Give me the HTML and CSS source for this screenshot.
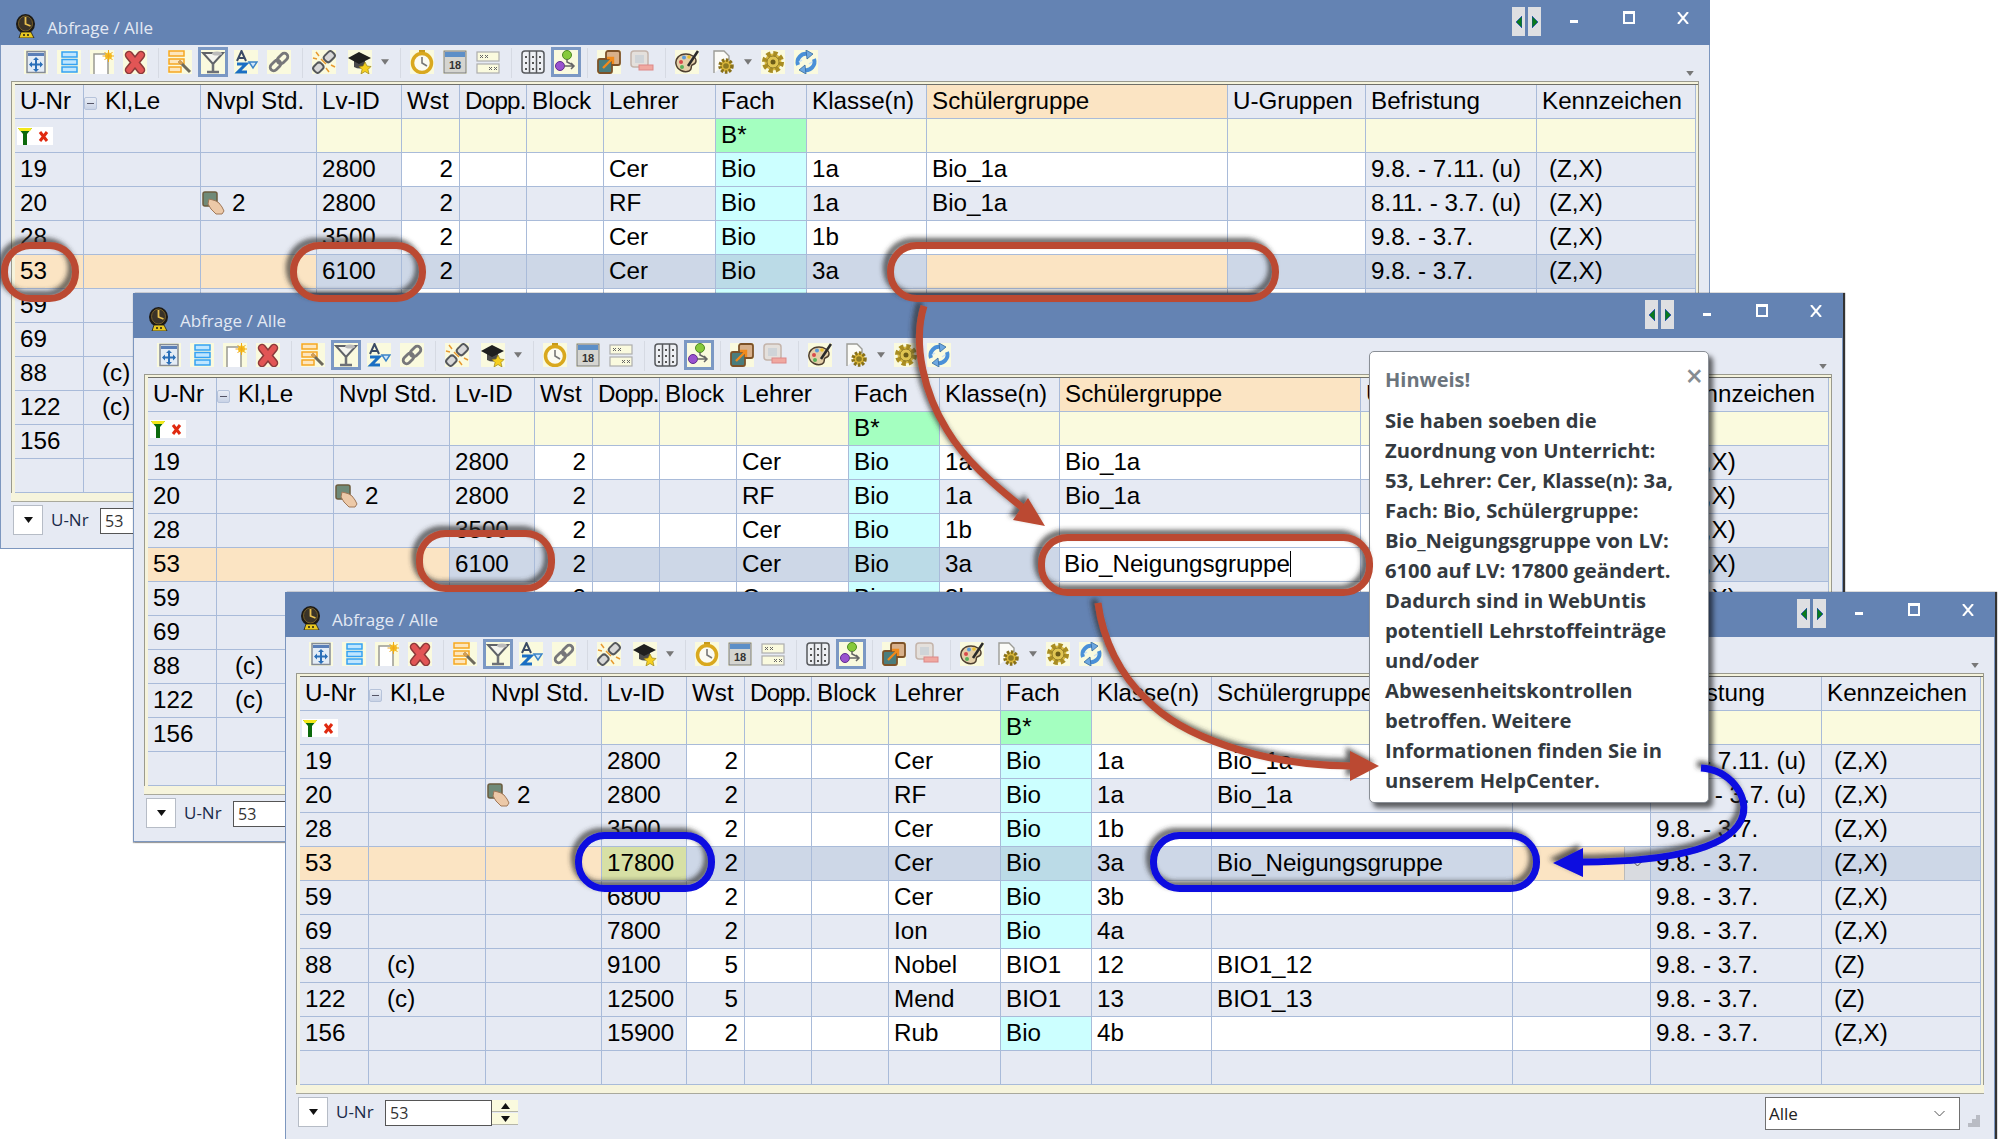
FILE: index.html
```html
<!DOCTYPE html>
<html lang="de">
<head>
<meta charset="utf-8">
<title>Abfrage / Alle</title>
<link rel="stylesheet" href="styles.css">
</head>
<body>
<svg class="defs" xmlns="http://www.w3.org/2000/svg">
  <symbol id="logo" viewBox="0 0 22 24">
    <ellipse cx="10.500" cy="10" rx="9.500" ry="10" fill="#1d1a16"/>
    <ellipse cx="10.500" cy="9.500" rx="7" ry="7.500" fill="#3a3328" stroke="#8a6d2a" stroke-width=".8"/>
    <path d="M10.500 3v7l5 2" fill="none" stroke="#e8c050" stroke-width="1.800"/>
    <path d="M6 18h10l3 6H4z" fill="#e8c820" stroke="#1d1a16" stroke-width=".8"/>
    <circle cx="9" cy="21" r="1" fill="#1d1a16"/><circle cx="13" cy="21" r="1" fill="#1d1a16"/>
  </symbol>
  <symbol id="i1" viewBox="0 0 24 24">
    <rect x="3" y="1.500" width="18" height="21" fill="#e3ecf6" stroke="#858b95" stroke-width="1.500"/>
    <rect x="4" y="3" width="16" height="3" fill="#5a7fb8"/>
    <path d="M12 8.500v12.500M6.500 14.500h11" stroke="#2a6fb8" stroke-width="2"/>
    <path d="M12 7l-3 3h6zM12 22l-3-3h6zM5 14.500l3-3v6zM19 14.500l-3-3v6z" fill="#2a6fb8"/>
  </symbol>
  <symbol id="i2" viewBox="0 0 24 24">
    <rect x="5" y="2" width="15" height="5" fill="#bfe6ff" stroke="#35a2f2" stroke-width="1.500"/>
    <rect x="5" y="9.500" width="15" height="5" fill="#bfe6ff" stroke="#35a2f2" stroke-width="1.500"/>
    <rect x="5" y="17" width="15" height="5" fill="#bfe6ff" stroke="#35a2f2" stroke-width="1.500"/>
  </symbol>
  <symbol id="i3" viewBox="0 0 24 24">
    <path d="M4 24V4h14v20" fill="#fff" stroke="#9a9a92" stroke-width="1.500"/>
    <circle cx="18.500" cy="6" r="3.500" fill="#f7c92c"/>
    <path d="M18.500 0v12M12.500 6h12M14.500 2l8 8M22.500 2l-8 8" stroke="#f0a818" stroke-width="1"/>
  </symbol>
  <symbol id="i4" viewBox="0 0 24 24">
    <path d="M6 5l12 15M18 5L6 20" stroke="#8c3a3a" stroke-width="8.500" stroke-linecap="round"/>
    <path d="M6 5l12 15M18 5L6 20" stroke="#e25555" stroke-width="5.500" stroke-linecap="round"/>
  </symbol>
  <symbol id="i5" viewBox="0 0 24 24">
    <rect x="1" y="1" width="15" height="5" fill="#fde6bd" stroke="#f5a623" stroke-width="1.500"/>
    <rect x="1" y="9" width="15" height="5" fill="#fde6bd" stroke="#f5a623" stroke-width="1.500"/>
    <rect x="1" y="17" width="12" height="5" fill="#fde6bd" stroke="#f5a623" stroke-width="1.500"/>
    <path d="M11 11l11 11" stroke="#6e6a5c" stroke-width="3"/><path d="M11 11l3 3" stroke="#d9a050" stroke-width="3"/>
  </symbol>
  <symbol id="i6" viewBox="0 0 24 24">
    <path d="M2 3h20l-10 11z" fill="#f4f4ee" stroke="#5f6268" stroke-width="2"/>
    <path d="M12 14v8M6 22h12" stroke="#6d7076" stroke-width="2.500"/>
    <ellipse cx="16" cy="3.500" rx="5" ry="2" fill="#bbb"/>
  </symbol>
  <symbol id="i7" viewBox="0 0 24 24">
    <path d="M3 11L7.500 1 12 11M5 8h5" fill="none" stroke="#3a4a66" stroke-width="2"/>
    <path d="M3 14h9L4 22h9" fill="none" stroke="#1a6fc4" stroke-width="3"/>
    <path d="M15 12h8l-4 6z" fill="#cfe6fa" stroke="#3b84c8" stroke-width="1.500"/>
  </symbol>
  <symbol id="i8" viewBox="0 0 24 24">
    <g transform="rotate(-45 12 12)" fill="none" stroke="#77777a" stroke-width="2.800">
      <rect x="1" y="8.500" width="12" height="7" rx="3.500"/>
      <rect x="11" y="8.500" width="12" height="7" rx="3.500"/>
    </g>
  </symbol>
  <symbol id="i9" viewBox="0 0 24 24">
    <g transform="rotate(-45 12 12)" fill="#d8d8d8" stroke="#55585c" stroke-width="2">
      <rect x="-1" y="8" width="10" height="8" rx="3"/>
      <rect x="14" y="8" width="11" height="8" rx="3"/>
    </g>
    <path d="M4 2l3 4M1 8l4 1M14 18l3 4M19 15l4 2M9 9l5 5" stroke="#e89a30" stroke-width="1.500"/>
  </symbol>
  <symbol id="i10" viewBox="0 0 24 24">
    <path d="M6 10v7q6 3 11 0v-7z" fill="#4a4a4a"/>
    <path d="M11 2l12 6-12 6L0 8z" fill="#1f1f1f"/>
    <path d="M17 12l2 4 4 .5-3 3 1 4.500-4-2.500-4 2.500 1-4.500-3-3 4-.5z" fill="#f6cf1f" stroke="#8a7510" stroke-width=".6"/>
  </symbol>
  <symbol id="i11" viewBox="0 0 24 24">
    <rect x="9" y="0" width="6" height="4" fill="#c79a18"/>
    <circle cx="12" cy="13" r="9.500" fill="#fbfbf2" stroke="#d9a81e" stroke-width="3.500"/>
    <path d="M12 7v6l5 3" fill="none" stroke="#777" stroke-width="1.600"/>
  </symbol>
  <symbol id="i12" viewBox="0 0 24 24">
    <rect x="1" y="1" width="22" height="22" fill="#d5d5d0" stroke="#77787c"/>
    <rect x="2" y="2" width="20" height="5" fill="#5d8fc7"/>
    <text x="12" y="19" class="svgt" text-anchor="middle">18</text>
  </symbol>
  <symbol id="i13" viewBox="0 0 24 24">
    <rect x="1" y="2" width="22" height="9" fill="#fafade" stroke="#adadad" stroke-width="1.200"/>
    <rect x="1" y="14" width="22" height="9" fill="#fafade" stroke="#adadad" stroke-width="1.200"/>
    <path d="M4 5l3 3M7 5l-3 3M9 5l3 3M12 5l-3 3M13 17l3 3M16 17l-3 3M18 17l3 3M21 17l-3 3" stroke="#666" stroke-width="1"/>
  </symbol>
  <symbol id="i14" viewBox="0 0 24 24">
    <rect x="1" y="1" width="22" height="22" rx="3" fill="#eef0f4" stroke="#57595d" stroke-width="1.500"/>
    <path d="M8.500 1v22M15.500 1v22" stroke="#57595d" stroke-width="1.500"/>
    <path d="M5 6v2M5 12v2M5 18v2M12 6v2M12 12v2M12 18v2M19 6v2M19 12v2M19 18v2" stroke="#555" stroke-width="2"/>
  </symbol>
  <symbol id="i15" viewBox="0 0 24 24">
    <circle cx="13" cy="5" r="4.500" fill="#86c93a" stroke="#4c8a22"/>
    <circle cx="6" cy="16" r="4.500" fill="#9a52cf" stroke="#5f2a8f"/>
    <path d="M13 9v3l6 3M10 16h10M17 13l3 3-3 3" fill="none" stroke="#666" stroke-width="1.500"/>
  </symbol>
  <symbol id="i16" viewBox="0 0 24 24">
    <rect x="9" y="1" width="14" height="14" rx="2" fill="#d8b08a" stroke="#7d5228" stroke-width="1.800"/>
    <rect x="1" y="9" width="14" height="14" rx="2" fill="#4a7d7d" stroke="#7d5228" stroke-width="1.800"/>
    <path d="M6 18l9-9M10 8h6v6" fill="none" stroke="#f08a1c" stroke-width="2.400"/>
  </symbol>
  <symbol id="i17" viewBox="0 0 24 24">
    <rect x="1" y="1" width="17" height="16" rx="3" fill="#e4e0dc" stroke="#c4b4aa" stroke-width="1.500"/>
    <rect x="5" y="5" width="9" height="8" fill="#cfd4d8"/>
    <rect x="9" y="15" width="14" height="5" fill="#f0a8a0" stroke="#d88"/>
  </symbol>
  <symbol id="i18" viewBox="0 0 24 24">
    <path d="M11 4C4 4 0 9 1 14c1 6 8 9 13 7 4-2 1-4 3-6 2-1 4-1 4-4 0-4-5-7-10-7z" fill="#e4cfa8" stroke="#4e3f30" stroke-width="1.500"/>
    <circle cx="6" cy="12" r="2" fill="#d84a4a"/><circle cx="9" cy="7.500" r="2" fill="#5a9ad8"/><circle cx="7" cy="17" r="2" fill="#5ab05a"/><circle cx="14" cy="7" r="1.800" fill="#e8c030"/>
    <path d="M23 1L13 16" stroke="#2a2a2a" stroke-width="2.600"/>
  </symbol>
  <symbol id="i19" viewBox="0 0 24 24">
    <path d="M3 23V1h10l5 5v6" fill="#fbfbf7" stroke="#9c9c96" stroke-width="1.400"/>
    <circle cx="15" cy="16" r="6" fill="#d9b63a" stroke="#87701a" stroke-width="3.500" stroke-dasharray="2.400 1.520"/>
    <circle cx="15" cy="16" r="2.800" fill="#8d7a22"/>
  </symbol>
  <symbol id="i20" viewBox="0 0 24 24">
    <circle cx="12" cy="12" r="8.500" fill="#d9bb44" stroke="#a98d22" stroke-width="5" stroke-dasharray="4 2.680"/>
    <circle cx="12" cy="12" r="6" fill="#e0c552" stroke="#8f7a25"/>
    <circle cx="12" cy="12" r="2.500" fill="#6c5c18"/>
  </symbol>
  <symbol id="i21" viewBox="0 0 24 24">
    <path d="M4 15A8.500 8.500 0 0 1 14 4M20 9A8.500 8.500 0 0 1 10 20" fill="none" stroke="#4a90d8" stroke-width="4"/>
    <path d="M12 0l7 4-6 5zM12 24l-7-4 6-5z" fill="#6ea8e0" stroke="#33689e" stroke-width=".8"/>
    <path d="M5 12l3-2M15 14l3-2" stroke="#c8e0f6" stroke-width="1.500"/>
  </symbol>
  <symbol id="hand" viewBox="0 0 24 24">
    <rect x="1" y="1" width="14" height="14" rx="2" fill="#6f8a78" stroke="#6b5c3e" stroke-width="1.500"/>
    <path d="M7 8l4 1 3 1 3 2 3 4 2 4-2 3h-6l-5-5-3-5z" fill="#ecc9a8" stroke="#a07858" stroke-width="1"/>
  </symbol>
  <symbol id="fil" viewBox="0 0 36 18">
    <rect width="36" height="18" fill="#fff"/>
    <path d="M1 1h14l-5 6v11H6V7z" fill="#0c6a0c"/><path d="M1 1h14l-2 3H3z" fill="#f3e81a"/>
    <path d="M23 5l7 9M30 5l-7 9" stroke="#e02a10" stroke-width="3"/>
  </symbol>
  <symbol id="tri" viewBox="0 0 9 6"><path d="M0 0h9L4.500 6z" fill="#777"/></symbol>
  <symbol id="tb" viewBox="0 0 9 6"><path d="M0 0h9L4.500 6z" fill="#111"/></symbol>
  <symbol id="tu" viewBox="0 0 9 6"><path d="M0 6h9L4.500 0z" fill="#111"/></symbol>
  <symbol id="chev" viewBox="0 0 11 7"><path d="M.5 1l5 5 5-5" fill="none" stroke="#555" stroke-width="1"/></symbol>
  <symbol id="left" viewBox="0 0 6 12"><path d="M6 0v12L0 6z" fill="#0a7a1c" stroke="#1a40c0" stroke-width=".7"/></symbol>
  <symbol id="right" viewBox="0 0 6 12"><path d="M0 0v12l6-6z" fill="#0a7a1c" stroke="#1a40c0" stroke-width=".7"/></symbol>
</svg>

<!-- Window 1 -->
<section class="win win1">
  <header class="title">
    <svg class="logo"><use href="#logo"/></svg><span class="ttext">Abfrage / Alle</span>
    <div class="nav"><span class="navb"><svg class="nava"><use href="#left"/></svg></span><span class="navb"><svg class="nava"><use href="#right"/></svg></span></div>
    <span class="min"></span><span class="max"></span>
    <svg class="cls" viewBox="0 0 12 12"><path d="M1 0l10 12M11 0L1 12" stroke="#fff" stroke-width="2"/></svg>
  </header>
  <div class="tools">
    <svg class="ic"><use href="#i1"/></svg><svg class="ic"><use href="#i2"/></svg><svg class="ic"><use href="#i3"/></svg><svg class="ic"><use href="#i4"/></svg><span class="sep"></span>
    <svg class="ic"><use href="#i5"/></svg><svg class="ic on"><use href="#i6"/></svg><svg class="ic"><use href="#i7"/></svg><svg class="ic"><use href="#i8"/></svg><span class="sep"></span>
    <svg class="ic"><use href="#i9"/></svg><svg class="ic ml3"><use href="#i10"/></svg><svg class="dd"><use href="#tri"/></svg><span class="sep"></span>
    <svg class="ic"><use href="#i11"/></svg><svg class="ic"><use href="#i12"/></svg><svg class="ic nobg"><use href="#i13"/></svg><span class="sep"></span>
    <svg class="ic nobg"><use href="#i14"/></svg><svg class="ic on mr7"><use href="#i15"/></svg><span class="sep"></span>
    <svg class="ic"><use href="#i16"/></svg><svg class="ic nobg"><use href="#i17"/></svg><span class="sep"></span>
    <svg class="ic"><use href="#i18"/></svg><svg class="ic nobg ml3"><use href="#i19"/></svg><svg class="dd"><use href="#tri"/></svg><svg class="ic"><use href="#i20"/></svg><svg class="ic"><use href="#i21"/></svg>
    <svg class="more"><use href="#tri"/></svg>
  </div>
  <div class="frame"><div class="frame2">
    <table class="grid">
      <colgroup><col class="c1"><col class="c2"><col class="c3"><col class="c4"><col class="c5"><col class="c6"><col class="c7"><col class="c8"><col class="c9"><col class="c10"><col class="c11"><col class="c12"><col class="c13"><col class="c14"></colgroup>
      <tr class="head"><th>U-Nr</th><th class="kl"><span class="minus"></span>Kl,Le</th><th>Nvpl Std.</th><th>Lv-ID</th><th>Wst</th><th class="tight">Dopp.</th><th>Block</th><th>Lehrer</th><th>Fach</th><th>Klasse(n)</th><th class="peach">Schülergruppe</th><th>U-Gruppen</th><th>Befristung</th><th>Kennzeichen</th></tr>
      <tr class="filter"><td class="fc"><svg class="fil"><use href="#fil"/></svg></td><td></td><td></td><td class="cr"></td><td class="cr"></td><td class="cr"></td><td class="cr"></td><td class="cr"></td><td class="gr">B*</td><td class="cr"></td><td class="cr"></td><td class="cr"></td><td class="cr"></td><td class="cr"></td></tr>
      <tr class="w"><td>19</td><td></td><td></td><td>2800</td><td>2</td><td></td><td></td><td>Cer</td><td class="cy">Bio</td><td>1a</td><td>Bio_1a</td><td></td><td>9.8. - 7.11. (u)</td><td>(Z,X)</td></tr>
      <tr class="g"><td>20</td><td></td><td class="np"><svg class="hand"><use href="#hand"/></svg>2</td><td>2800</td><td>2</td><td></td><td></td><td>RF</td><td class="cy">Bio</td><td>1a</td><td>Bio_1a</td><td></td><td>8.11. - 3.7. (u)</td><td>(Z,X)</td></tr>
      <tr class="w"><td>28</td><td></td><td></td><td>3500</td><td>2</td><td></td><td></td><td>Cer</td><td class="cy">Bio</td><td>1b</td><td></td><td></td><td>9.8. - 3.7.</td><td>(Z,X)</td></tr>
      <tr class="s"><td>53</td><td></td><td></td><td>6100</td><td>2</td><td></td><td></td><td>Cer</td><td class="cys">Bio</td><td>3a</td><td class="peach"></td><td></td><td>9.8. - 3.7.</td><td>(Z,X)</td></tr>
      <tr class="w"><td>59</td><td></td><td></td><td>6800</td><td>2</td><td></td><td></td><td>Cer</td><td class="cy">Bio</td><td>3b</td><td></td><td></td><td>9.8. - 3.7.</td><td>(Z,X)</td></tr>
      <tr class="g"><td>69</td><td></td><td></td><td>7800</td><td>2</td><td></td><td></td><td>Ion</td><td class="cy">Bio</td><td>4a</td><td></td><td></td><td>9.8. - 3.7.</td><td>(Z,X)</td></tr>
      <tr class="w"><td>88</td><td>(c)</td><td></td><td>9100</td><td>5</td><td></td><td></td><td>Nobel</td><td>BIO1</td><td>12</td><td>BIO1_12</td><td></td><td>9.8. - 3.7.</td><td>(Z)</td></tr>
      <tr class="g"><td>122</td><td>(c)</td><td></td><td>12500</td><td>5</td><td></td><td></td><td>Mend</td><td>BIO1</td><td>13</td><td>BIO1_13</td><td></td><td>9.8. - 3.7.</td><td>(Z)</td></tr>
      <tr class="w"><td>156</td><td></td><td></td><td>15900</td><td>2</td><td></td><td></td><td>Rub</td><td class="cy">Bio</td><td>4b</td><td></td><td></td><td>9.8. - 3.7.</td><td>(Z,X)</td></tr>
      <tr class="g"><td></td><td></td><td></td><td></td><td></td><td></td><td></td><td></td><td></td><td></td><td></td><td></td><td></td><td></td></tr>
    </table>
  </div></div>
  <div class="split"></div>
  <footer class="foot">
    <span class="fbtn"><svg class="t9"><use href="#tb"/></svg></span><span class="flab">U-Nr</span><span class="finp">53</span>
    <span class="spin"><span class="spb"><svg class="t9"><use href="#tu"/></svg></span><span class="spb"><svg class="t9"><use href="#tb"/></svg></span></span>
    <span class="sel">Alle<svg class="chev"><use href="#chev"/></svg></span>
    <svg class="grip" viewBox="0 0 12 12"><path d="M8 0h4v4H8zM4 4h4v4H4zM8 4h4v4H8zM0 8h4v4H0zM4 8h4v4H4zM8 8h4v4H8z" fill="#b9bcc4"/></svg>
  </footer>
</section>

<!-- Window 2 -->
<section class="win win2">
  <header class="title">
    <svg class="logo"><use href="#logo"/></svg><span class="ttext">Abfrage / Alle</span>
    <div class="nav"><span class="navb"><svg class="nava"><use href="#left"/></svg></span><span class="navb"><svg class="nava"><use href="#right"/></svg></span></div>
    <span class="min"></span><span class="max"></span>
    <svg class="cls" viewBox="0 0 12 12"><path d="M1 0l10 12M11 0L1 12" stroke="#fff" stroke-width="2"/></svg>
  </header>
  <div class="tools">
    <svg class="ic"><use href="#i1"/></svg><svg class="ic"><use href="#i2"/></svg><svg class="ic"><use href="#i3"/></svg><svg class="ic"><use href="#i4"/></svg><span class="sep"></span>
    <svg class="ic"><use href="#i5"/></svg><svg class="ic on"><use href="#i6"/></svg><svg class="ic"><use href="#i7"/></svg><svg class="ic"><use href="#i8"/></svg><span class="sep"></span>
    <svg class="ic"><use href="#i9"/></svg><svg class="ic ml3"><use href="#i10"/></svg><svg class="dd"><use href="#tri"/></svg><span class="sep"></span>
    <svg class="ic"><use href="#i11"/></svg><svg class="ic"><use href="#i12"/></svg><svg class="ic nobg"><use href="#i13"/></svg><span class="sep"></span>
    <svg class="ic nobg"><use href="#i14"/></svg><svg class="ic on mr7"><use href="#i15"/></svg><span class="sep"></span>
    <svg class="ic"><use href="#i16"/></svg><svg class="ic nobg"><use href="#i17"/></svg><span class="sep"></span>
    <svg class="ic"><use href="#i18"/></svg><svg class="ic nobg ml3"><use href="#i19"/></svg><svg class="dd"><use href="#tri"/></svg><svg class="ic"><use href="#i20"/></svg><svg class="ic"><use href="#i21"/></svg>
    <svg class="more"><use href="#tri"/></svg>
  </div>
  <div class="frame"><div class="frame2">
    <table class="grid">
      <colgroup><col class="c1"><col class="c2"><col class="c3"><col class="c4"><col class="c5"><col class="c6"><col class="c7"><col class="c8"><col class="c9"><col class="c10"><col class="c11"><col class="c12"><col class="c13"><col class="c14"></colgroup>
      <tr class="head"><th>U-Nr</th><th class="kl"><span class="minus"></span>Kl,Le</th><th>Nvpl Std.</th><th>Lv-ID</th><th>Wst</th><th class="tight">Dopp.</th><th>Block</th><th>Lehrer</th><th>Fach</th><th>Klasse(n)</th><th class="peach">Schülergruppe</th><th>U-Gruppen</th><th>Befristung</th><th>Kennzeichen</th></tr>
      <tr class="filter"><td class="fc"><svg class="fil"><use href="#fil"/></svg></td><td></td><td></td><td class="cr"></td><td class="cr"></td><td class="cr"></td><td class="cr"></td><td class="cr"></td><td class="gr">B*</td><td class="cr"></td><td class="cr"></td><td class="cr"></td><td class="cr"></td><td class="cr"></td></tr>
      <tr class="w"><td>19</td><td></td><td></td><td>2800</td><td>2</td><td></td><td></td><td>Cer</td><td class="cy">Bio</td><td>1a</td><td>Bio_1a</td><td></td><td>9.8. - 7.11. (u)</td><td>(Z,X)</td></tr>
      <tr class="g"><td>20</td><td></td><td class="np"><svg class="hand"><use href="#hand"/></svg>2</td><td>2800</td><td>2</td><td></td><td></td><td>RF</td><td class="cy">Bio</td><td>1a</td><td>Bio_1a</td><td></td><td>8.11. - 3.7. (u)</td><td>(Z,X)</td></tr>
      <tr class="w"><td>28</td><td></td><td></td><td>3500</td><td>2</td><td></td><td></td><td>Cer</td><td class="cy">Bio</td><td>1b</td><td></td><td></td><td>9.8. - 3.7.</td><td>(Z,X)</td></tr>
      <tr class="s"><td>53</td><td></td><td></td><td>6100</td><td>2</td><td></td><td></td><td>Cer</td><td class="cys">Bio</td><td>3a</td><td class="edit"><span class="caret">Bio_Neigungsgruppe</span></td><td></td><td>9.8. - 3.7.</td><td>(Z,X)</td></tr>
      <tr class="w"><td>59</td><td></td><td></td><td>6800</td><td>2</td><td></td><td></td><td>Cer</td><td class="cy">Bio</td><td>3b</td><td></td><td></td><td>9.8. - 3.7.</td><td>(Z,X)</td></tr>
      <tr class="g"><td>69</td><td></td><td></td><td>7800</td><td>2</td><td></td><td></td><td>Ion</td><td class="cy">Bio</td><td>4a</td><td></td><td></td><td>9.8. - 3.7.</td><td>(Z,X)</td></tr>
      <tr class="w"><td>88</td><td>(c)</td><td></td><td>9100</td><td>5</td><td></td><td></td><td>Nobel</td><td>BIO1</td><td>12</td><td>BIO1_12</td><td></td><td>9.8. - 3.7.</td><td>(Z)</td></tr>
      <tr class="g"><td>122</td><td>(c)</td><td></td><td>12500</td><td>5</td><td></td><td></td><td>Mend</td><td>BIO1</td><td>13</td><td>BIO1_13</td><td></td><td>9.8. - 3.7.</td><td>(Z)</td></tr>
      <tr class="w"><td>156</td><td></td><td></td><td>15900</td><td>2</td><td></td><td></td><td>Rub</td><td class="cy">Bio</td><td>4b</td><td></td><td></td><td>9.8. - 3.7.</td><td>(Z,X)</td></tr>
      <tr class="g"><td></td><td></td><td></td><td></td><td></td><td></td><td></td><td></td><td></td><td></td><td></td><td></td><td></td><td></td></tr>
    </table>
  </div></div>
  <div class="split"></div>
  <footer class="foot">
    <span class="fbtn"><svg class="t9"><use href="#tb"/></svg></span><span class="flab">U-Nr</span><span class="finp">53</span>
    <span class="spin"><span class="spb"><svg class="t9"><use href="#tu"/></svg></span><span class="spb"><svg class="t9"><use href="#tb"/></svg></span></span>
    <span class="sel">Alle<svg class="chev"><use href="#chev"/></svg></span>
    <svg class="grip" viewBox="0 0 12 12"><path d="M8 0h4v4H8zM4 4h4v4H4zM8 4h4v4H8zM0 8h4v4H0zM4 8h4v4H4zM8 8h4v4H8z" fill="#b9bcc4"/></svg>
  </footer>
</section>

<!-- Window 3 -->
<section class="win win3">
  <header class="title">
    <svg class="logo"><use href="#logo"/></svg><span class="ttext">Abfrage / Alle</span>
    <div class="nav"><span class="navb"><svg class="nava"><use href="#left"/></svg></span><span class="navb"><svg class="nava"><use href="#right"/></svg></span></div>
    <span class="min"></span><span class="max"></span>
    <svg class="cls" viewBox="0 0 12 12"><path d="M1 0l10 12M11 0L1 12" stroke="#fff" stroke-width="2"/></svg>
  </header>
  <div class="tools">
    <svg class="ic"><use href="#i1"/></svg><svg class="ic"><use href="#i2"/></svg><svg class="ic"><use href="#i3"/></svg><svg class="ic"><use href="#i4"/></svg><span class="sep"></span>
    <svg class="ic"><use href="#i5"/></svg><svg class="ic on"><use href="#i6"/></svg><svg class="ic"><use href="#i7"/></svg><svg class="ic"><use href="#i8"/></svg><span class="sep"></span>
    <svg class="ic"><use href="#i9"/></svg><svg class="ic ml3"><use href="#i10"/></svg><svg class="dd"><use href="#tri"/></svg><span class="sep"></span>
    <svg class="ic"><use href="#i11"/></svg><svg class="ic"><use href="#i12"/></svg><svg class="ic nobg"><use href="#i13"/></svg><span class="sep"></span>
    <svg class="ic nobg"><use href="#i14"/></svg><svg class="ic on mr7"><use href="#i15"/></svg><span class="sep"></span>
    <svg class="ic"><use href="#i16"/></svg><svg class="ic nobg"><use href="#i17"/></svg><span class="sep"></span>
    <svg class="ic"><use href="#i18"/></svg><svg class="ic nobg ml3"><use href="#i19"/></svg><svg class="dd"><use href="#tri"/></svg><svg class="ic"><use href="#i20"/></svg><svg class="ic"><use href="#i21"/></svg>
    <svg class="more"><use href="#tri"/></svg>
  </div>
  <div class="frame"><div class="frame2">
    <table class="grid">
      <colgroup><col class="c1"><col class="c2"><col class="c3"><col class="c4"><col class="c5"><col class="c6"><col class="c7"><col class="c8"><col class="c9"><col class="c10"><col class="c11"><col class="c12"><col class="c13"><col class="c14"></colgroup>
      <tr class="head"><th>U-Nr</th><th class="kl"><span class="minus"></span>Kl,Le</th><th>Nvpl Std.</th><th>Lv-ID</th><th>Wst</th><th class="tight">Dopp.</th><th>Block</th><th>Lehrer</th><th>Fach</th><th>Klasse(n)</th><th>Schülergruppe</th><th>U-Gruppen</th><th>Befristung</th><th>Kennzeichen</th></tr>
      <tr class="filter"><td class="fc"><svg class="fil"><use href="#fil"/></svg></td><td></td><td></td><td class="cr"></td><td class="cr"></td><td class="cr"></td><td class="cr"></td><td class="cr"></td><td class="gr">B*</td><td class="cr"></td><td class="cr"></td><td class="cr"></td><td class="cr"></td><td class="cr"></td></tr>
      <tr class="w"><td>19</td><td></td><td></td><td>2800</td><td>2</td><td></td><td></td><td>Cer</td><td class="cy">Bio</td><td>1a</td><td>Bio_1a</td><td></td><td>9.8. - 7.11. (u)</td><td>(Z,X)</td></tr>
      <tr class="g"><td>20</td><td></td><td class="np"><svg class="hand"><use href="#hand"/></svg>2</td><td>2800</td><td>2</td><td></td><td></td><td>RF</td><td class="cy">Bio</td><td>1a</td><td>Bio_1a</td><td></td><td>8.11. - 3.7. (u)</td><td>(Z,X)</td></tr>
      <tr class="w"><td>28</td><td></td><td></td><td>3500</td><td>2</td><td></td><td></td><td>Cer</td><td class="cy">Bio</td><td>1b</td><td></td><td></td><td>9.8. - 3.7.</td><td>(Z,X)</td></tr>
      <tr class="s"><td>53</td><td></td><td></td><td class="chg">17800</td><td>2</td><td></td><td></td><td>Cer</td><td class="cys">Bio</td><td>3a</td><td>Bio_Neigungsgruppe</td><td class="peach pick"><span class="pickb"><svg class="chev"><use href="#chev"/></svg></span></td><td>9.8. - 3.7.</td><td>(Z,X)</td></tr>
      <tr class="w"><td>59</td><td></td><td></td><td>6800</td><td>2</td><td></td><td></td><td>Cer</td><td class="cy">Bio</td><td>3b</td><td></td><td></td><td>9.8. - 3.7.</td><td>(Z,X)</td></tr>
      <tr class="g"><td>69</td><td></td><td></td><td>7800</td><td>2</td><td></td><td></td><td>Ion</td><td class="cy">Bio</td><td>4a</td><td></td><td></td><td>9.8. - 3.7.</td><td>(Z,X)</td></tr>
      <tr class="w"><td>88</td><td>(c)</td><td></td><td>9100</td><td>5</td><td></td><td></td><td>Nobel</td><td>BIO1</td><td>12</td><td>BIO1_12</td><td></td><td>9.8. - 3.7.</td><td>(Z)</td></tr>
      <tr class="g"><td>122</td><td>(c)</td><td></td><td>12500</td><td>5</td><td></td><td></td><td>Mend</td><td>BIO1</td><td>13</td><td>BIO1_13</td><td></td><td>9.8. - 3.7.</td><td>(Z)</td></tr>
      <tr class="w"><td>156</td><td></td><td></td><td>15900</td><td>2</td><td></td><td></td><td>Rub</td><td class="cy">Bio</td><td>4b</td><td></td><td></td><td>9.8. - 3.7.</td><td>(Z,X)</td></tr>
      <tr class="g"><td></td><td></td><td></td><td></td><td></td><td></td><td></td><td></td><td></td><td></td><td></td><td></td><td></td><td></td></tr>
    </table>
  </div></div>
  <div class="split"></div>
  <footer class="foot">
    <span class="fbtn"><svg class="t9"><use href="#tb"/></svg></span><span class="flab">U-Nr</span><span class="finp">53</span>
    <span class="spin"><span class="spb"><svg class="t9"><use href="#tu"/></svg></span><span class="spb"><svg class="t9"><use href="#tb"/></svg></span></span>
    <span class="sel">Alle<svg class="chev"><use href="#chev"/></svg></span>
    <svg class="grip" viewBox="0 0 12 12"><path d="M8 0h4v4H8zM4 4h4v4H4zM8 4h4v4H8zM0 8h4v4H0zM4 8h4v4H4zM8 8h4v4H8z" fill="#b9bcc4"/></svg>
  </footer>
</section>

<aside class="toast">
  <div class="thead"><h1 class="thint">Hinweis!</h1><span class="tx">×</span></div>
  <p class="tbody">Sie haben soeben die<br>Zuordnung von Unterricht:<br>53, Lehrer: Cer, Klasse(n): 3a,<br>Fach: Bio, Schülergruppe:<br>Bio_Neigungsgruppe von LV:<br>6100 auf LV: 17800 geändert.<br>Dadurch sind in WebUntis<br>potentiell Lehrstoffeinträge<br>und/oder<br>Abwesenheitskontrollen<br>betroffen. Weitere<br>Informationen finden Sie in<br>unserem HelpCenter.</p>
</aside>

<svg class="marks" viewBox="0 0 2004 1139" xmlns="http://www.w3.org/2000/svg">
  <defs>
    <filter id="sh" x="-10%" y="-10%" width="120%" height="120%">
      <feDropShadow dx="-4" dy="-4" stdDeviation="2.500" flood-color="#333" flood-opacity=".75"/>
    </filter>
  </defs>
  <g class="red" filter="url(#sh)">
    <rect x="4.500" y="245.500" width="71" height="53" rx="26"/>
    <rect x="293.500" y="245.500" width="129" height="53" rx="26"/>
    <rect x="890.500" y="245.500" width="385" height="53" rx="26"/>
    <rect x="419.500" y="533.500" width="132" height="55" rx="26"/>
    <rect x="1041.500" y="537.500" width="328" height="55" rx="26"/>
    <path d="M924 306C912 345 925 395 947 430C965 460 990 482 1028 512"/>
    <path class="hd" d="M1045 526L1028 498L1013 520Z"/>
    <path d="M1098 603C1103 640 1120 675 1147 700C1180 735 1260 766 1352 766"/>
    <path class="hd" d="M1379 766L1350 751V781Z"/>
  </g>
  <g class="blue" filter="url(#sh)">
    <rect x="578.500" y="835.500" width="133" height="53" rx="26"/>
    <rect x="1153.500" y="835.500" width="383" height="53" rx="26"/>
    <path d="M1701 768C1730 770 1748 795 1743 815C1735 845 1680 862 1580 862"/>
    <path class="hd" d="M1553 863L1583 848V877Z"/>
  </g>
</svg>
</body>
</html>
```
FILE: styles.css
```css
* { box-sizing: border-box; }
html, body { margin: 0; padding: 0; background: #fff; }
body { width: 2004px; height: 1139px; overflow: hidden; position: relative; font-family: "Liberation Sans", Arial, sans-serif; color: #000; }
.defs { position: absolute; width: 0; height: 0; }
.svgt { font: bold 11px "Liberation Sans", sans-serif; fill: #333; }

/* windows on a desktop */
.win { position: absolute; width: 1710px; height: 549px; background: #e6eaf3; display: flex; flex-direction: column; box-shadow: inset 0 0 0 1px #7d97bf; }
.win1 { left: 0; top: 0; }
.win2 { left: 133px; top: 293px; box-shadow: inset 0 0 0 1px #7d97bf, 2px 0 1px #333, 0 1px 1px rgba(0,0,0,.3); }
.win3 { left: 285px; top: 592px; box-shadow: inset 0 0 0 1px #7d97bf, 2px 0 1px #333; }

.title { height: 45px; flex: none; background: #6483b3; display: flex; align-items: flex-start; padding-left: 15px; }
.logo { width: 22px; height: 24px; margin-top: 14px; margin-right: 10px; }
.ttext { font: 17px/1 "Open Sans", sans-serif; color: #e3e9f3; margin-top: 19px; }
.nav { margin-left: auto; margin-top: 7px; margin-right: 29px; display: flex; gap: 3px; }
.navb { width: 13px; height: 29px; background: #dedfe2; display: flex; align-items: center; justify-content: center; }
.nava { width: 6px; height: 12px; }
.min { width: 8px; height: 3px; background: #fff; margin-top: 20px; margin-right: 45px; }
.max { width: 12px; height: 13px; border: 2px solid #fff; border-top-width: 3px; margin-top: 11px; margin-right: 42px; }
.cls { width: 12px; height: 12px; margin-top: 12px; margin-right: 21px; }

.tools { height: 36px; flex: none; display: flex; align-items: flex-start; padding: 5px 0 0 24px; position: relative; }
.ic { width: 24px; height: 24px; margin-right: 9px; background: #fafade; flex: none; }
.nobg { background: transparent; }
.on { outline: 3px solid #7b98c4; }
.ml3 { margin-left: 3px; }
.mr7 { margin-right: 7px; }
.sep { width: 1px; height: 30px; margin: -2px 9px 0 2px; background: #d6dae3; flex: none; }
.dd { width: 8px; height: 6px; margin-top: 9px; margin-right: 9px; flex: none; }
.more { width: 8px; height: 5px; margin-left: auto; margin-right: 16px; margin-top: 21px; flex: none; }

.frame { margin-left: 11px; width: 1688px; border: 1px solid #9a9a8e; border-bottom: 0; padding: 2px 2px 0 3px; background: #f5f3dc; flex: none; }
.frame2 { border-top: 1px solid #6f6f68; margin: 0 -2px 0 0; }
.grid { table-layout: fixed; border-collapse: separate; border-spacing: 0; width: 1681px; font-size: 24.2px; background: #e6eaf3; }
.c1 { width: 69px; } .c2 { width: 117px; } .c3 { width: 116px; } .c4 { width: 85px; } .c5 { width: 58px; }
.c6 { width: 67px; } .c7 { width: 77px; } .c8 { width: 112px; } .c9 { width: 91px; } .c10 { width: 120px; }
.c11 { width: 301px; } .c12 { width: 138px; } .c13 { width: 171px; } .c14 { width: 159px; }

.grid th, .grid td { height: 34px; padding: 0 0 2px 5px; font-weight: normal; text-align: left; overflow: hidden; white-space: nowrap; border-right: 1px solid #a9bbd9; border-bottom: 1px solid #a9bbd9; line-height: 31px; }
.grid td:nth-child(2) { padding-left: 18px; }
.grid td:nth-child(5) { text-align: right; padding: 0 6px 2px 0; }
.grid td:nth-child(14) { padding-left: 12px; }
.grid th.kl { padding-left: 0; }
.grid th.tight { letter-spacing: -.75px; }
.minus { display: inline-block; width: 13px; height: 13px; margin-right: 8px; vertical-align: -1px; background: linear-gradient(#e9edf5, #c9d3e6); border: 1px solid #b6c3da; border-radius: 2px; position: relative; }
.minus::after { content: ""; position: absolute; left: 2px; right: 2px; top: 5px; height: 1px; background: #556; }

.grid .peach { background: #fbe4c3; }
.grid .cr { background: #fafade; }
.grid .gr { background: #a4ffc0; }
.grid .fc { padding: 0 0 0 2px; line-height: 0; }
.fil { width: 36px; height: 18px; display: inline-block; vertical-align: middle; }

.w td:nth-child(n+5):nth-child(-n+12):not(.cy) { background: #fff; }
.grid .cy { background: #ccffff; }
.s td { background: #cdd7e7; }
.s td:nth-child(-n+3) { background: #fbe4c3; }
.grid .cys { background: #bbdbe7; }
.s .peach { background: #fbe4c3; }
.grid .chg { background: #d7e0a5; }
.grid .edit { background: #fff; padding-left: 4px; }
.caret { border-right: 1px solid #000; display: inline-block; line-height: 26px; }
.grid .np { padding-left: 1px; }
.hand { width: 24px; height: 24px; display: inline-block; vertical-align: middle; margin-right: 6px; margin-top: -3px; }
.grid .pick { padding: 0; position: relative; }
.pickb { display: flex; align-items: center; justify-content: center; float: right; width: 26px; height: 33px; background: #d9dbe0; border-left: 1px solid #bbb; }
.chev { width: 11px; height: 7px; }

.split { margin-left: 11px; width: 1688px; height: 9px; background: #f6f4dc; border-bottom: 1px solid #a9a99c; flex: none; }
.foot { flex: 1; display: flex; align-items: flex-start; padding: 3px 0 0 13px; font-family: "Open Sans", sans-serif; }
.fbtn { width: 30px; height: 30px; background: #fff; border: 1px solid #b6bcc6; display: flex; align-items: center; justify-content: center; }
.t9 { width: 9px; height: 6px; }
.flab { font-size: 17px; line-height: 28px; color: #1a2a4a; margin-left: 8px; margin-top: 1px; width: 49px; }
.finp { width: 107px; height: 26px; margin-top: 3px; background: #fff; border: 1px solid #555; font-size: 16px; line-height: 24px; padding-left: 4px; color: #333; }
.spin { width: 26px; margin-top: 3px; display: flex; flex-direction: column; gap: 1px; }
.spb { height: 12px; background: #fafade; display: flex; align-items: center; justify-content: center; border-bottom: 1px solid #b5b5a8; }
.sel { margin-left: auto; width: 195px; height: 33px; margin-top: 0; background: #fff; border: 1px solid #707070; font-size: 17px; line-height: 31px; padding: 0 14px 0 3px; display: flex; justify-content: space-between; align-items: center; color: #222; }
.grip { width: 12px; height: 12px; margin: 18px 15px 0 8px; }

/* popup over the windows */
.toast { position: absolute; left: 1369px; top: 351px; width: 340px; height: 452px; background: #fff; border: 1px solid #8a8f96; border-radius: 5px; box-shadow: 4px 5px 5px rgba(0,0,0,.6); padding: 12px 5px 8px 15px; font-family: "Open Sans", sans-serif; }
.thead { display: flex; justify-content: space-between; align-items: flex-start; height: 41px; }
.thint { margin: 0; font-size: 20px; font-weight: 700; line-height: 31px; color: #6c757d; }
.tx { font-size: 30px; font-weight: 600; line-height: 23px; color: #868c92; }
.tbody { margin: 0; font-size: 20.200px; font-weight: 700; line-height: 30px; color: #343a40; white-space: nowrap; }

/* annotation layer */
.marks { position: absolute; left: 0; top: 0; width: 2004px; height: 1139px; pointer-events: none; }
.red { fill: none; stroke: #bb4a30; stroke-width: 7px; }
.blue { fill: none; stroke: #0808e0; stroke-width: 7px; }
.red .hd { fill: #bb4a30; stroke: none; }
.blue .hd { fill: #0808e0; stroke: none; }
```
